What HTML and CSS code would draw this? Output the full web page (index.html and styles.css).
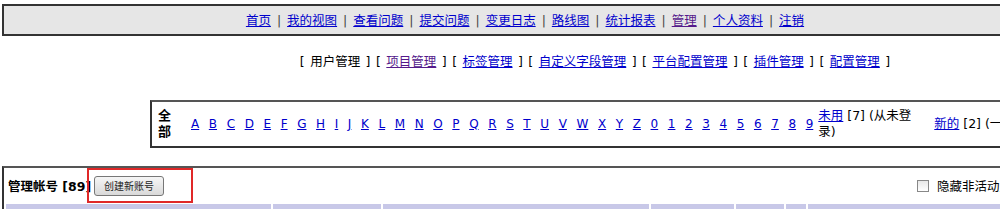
FILE: index.html
```html
<!DOCTYPE html>
<html lang="zh">
<head>
    <meta charset="UTF-8">
    <title>管理帐号</title>
    <link rel="stylesheet" href="styles.css">
</head>
<body>
    <div class="page">
        <div class="main-menu">
            <a href="#">首页</a> | <a href="#">我的视图</a> | <a href="#">查看问题</a> | <a href="#">提交问题</a> | <a href="#">变更日志</a> | <a href="#">路线图</a> | <a href="#">统计报表</a> | <a href="#" class="visited">管理</a> | <a href="#">个人资料</a> | <a href="#">注销</a>
        </div>

        <div class="manage-menu">
            [ 用户管理 ] [ <a href="#" class="visited">项目管理</a> ] [ <a href="#">标签管理</a> ] [ <a href="#">自定义字段管理</a> ] [ <a href="#">平台配置管理</a> ] [ <a href="#">插件管理</a> ] [ <a href="#">配置管理</a> ]
        </div>

        <div class="filter-box">
            <div class="all">全部</div>
            <div class="letters">
                <a href="#">A</a><a href="#">B</a><a href="#">C</a><a href="#">D</a><a href="#">E</a><a href="#">F</a><a href="#">G</a><a href="#">H</a><a href="#">I</a><a href="#">J</a><a href="#">K</a><a href="#">L</a><a href="#">M</a><a href="#">N</a><a href="#">O</a><a href="#">P</a><a href="#">Q</a><a href="#">R</a><a href="#">S</a><a href="#">T</a><a href="#">U</a><a href="#">V</a><a href="#">W</a><a href="#">X</a><a href="#">Y</a><a href="#">Z</a><a href="#">0</a><a href="#">1</a><a href="#">2</a><a href="#">3</a><a href="#">4</a><a href="#">5</a><a href="#">6</a><a href="#">7</a><a href="#">8</a><a href="#">9</a>
            </div>
            <div class="extra unused"><a href="#">未用</a> [7] (从未登录)</div>
            <div class="extra"><a href="#">新的</a> [2] (一周内)</div>
        </div>

        <div class="accounts">
            <div class="accounts-head">
                <span class="title">管理帐号 [89]</span>
                <button class="create-btn">创建新账号</button>
                <label class="hide-inactive"><span class="check"></span>隐藏非活动用户</label>
                <div class="highlight"></div>
            </div>
            <div class="table-head">
                <div class="col" style="width: 268px"></div>
                <div class="col" style="width: 110px"></div>
                <div class="col" style="width: 269px"></div>
                <div class="col" style="width: 84px"></div>
                <div class="col" style="width: 49px"></div>
                <div class="col" style="width: 20px"></div>
                <div class="col" style="width: 300px"></div>
            </div>
        </div>
    </div>
</body>
</html>
```

FILE: styles.css
```css
html, body {
    margin: 0;
    overflow: hidden;
}

body {
    font-family: Verdana, "DejaVu Sans", "Noto Sans CJK SC", sans-serif;
    font-size: 12px;
    color: #000;
    background: #fff;
}

a {
    color: #0000cc;
}

a.visited {
    color: #551a8b;
}

.page {
    width: 1200px;
    padding: 4px 0 0 2px;
}

.main-menu {
    width: 1042px;
    height: 28px;
    line-height: 29px;
    border: 2px solid #333;
    background: #e6e6e6;
    text-align: center;
    color: #444;
    font-size: 12.5px;
    word-spacing: 2px;
}

.manage-menu {
    width: 1046px;
    margin-top: 17px;
    padding-left: 140px;
    box-sizing: border-box;
    text-align: center;
    line-height: 18px;
    white-space: nowrap;
    font-size: 12.5px;
    word-spacing: 1.5px;
}

.filter-box {
    display: flex;
    align-items: center;
    margin: 29px 0 0 148px;
    width: 1000px;
    height: 44px;
    border: 2px solid #333;
    border-top-color: #555;
    padding-left: 6px;
    line-height: 16px;
}

.filter-box > div {
    flex: none;
}

.all {
    width: 14px;
    font-weight: bold;
    font-size: 13px;
    margin-right: 19px;
}

.letters {
    display: flex;
    gap: 9.6px;
    margin-right: 5px;
}

.extra {
    width: 104px;
    margin-right: 12px;
    font-size: 12.5px;
}

.accounts {
    margin-top: 18px;
    border-top: 2px solid #555;
    border-left: 2px solid #333;
    width: 1100px;
}

.accounts-head {
    position: relative;
    display: flex;
    align-items: center;
    height: 35px;
    padding-left: 4px;
}

.title {
    font-weight: bold;
    font-size: 12.5px;
    width: 86px;
}

.create-btn {
    font-family: "Noto Sans CJK SC", sans-serif;
    font-size: 10px;
    width: 70px;
    height: 20px;
    padding: 0;
    border: 1px solid #777;
    border-radius: 3px;
    background: linear-gradient(#f6f6f6, #d9d9d9);
    color: #222;
}

.hide-inactive {
    display: flex;
    align-items: center;
    margin-left: 753px;
    white-space: nowrap;
    font-family: "Noto Sans CJK SC", sans-serif;
    font-size: 12.5px;
}

.check {
    width: 10px;
    height: 10px;
    border: 1px solid #888;
    background: linear-gradient(#e8e8e8, #fff);
    margin-right: 8px;
}

.highlight {
    position: absolute;
    left: 83px;
    top: 0;
    width: 102px;
    height: 31px;
    border: 2px solid #e02828;
}

.table-head {
    display: flex;
    gap: 2px;
    margin-top: 1px;
    padding-left: 2px;
}

.col {
    height: 20px;
    background: #c8c8e8;
}
```
